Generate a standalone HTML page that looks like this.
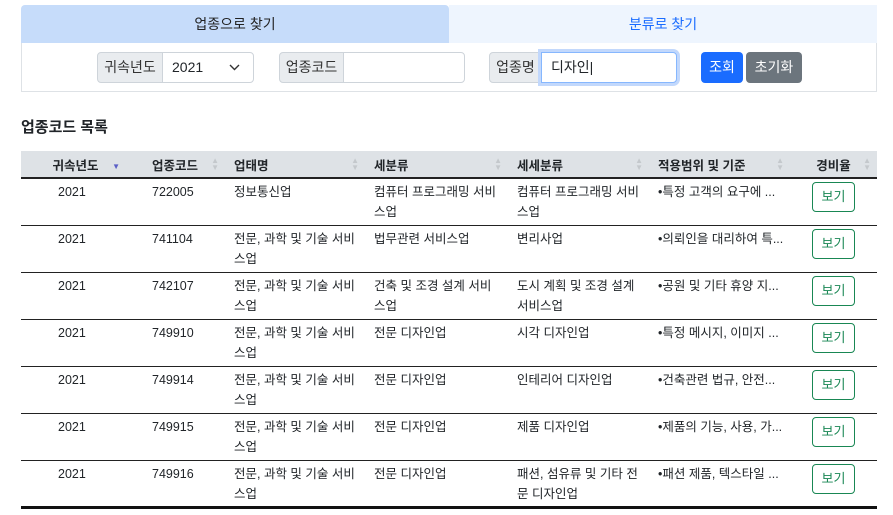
<!DOCTYPE html>
<html><head><meta charset="utf-8"><style>
*{box-sizing:border-box;margin:0;padding:0}
body{width:893px;height:515px;overflow:hidden;background:#fff;font-family:"Liberation Sans","Noto Sans CJK KR",sans-serif;color:#212529;font-size:13px;position:relative}
.abs{position:absolute}
.tab{top:5px;height:38px;line-height:38px;text-align:center;font-size:14px}
.lbl{background:#e9ecef;border:1px solid #ced4da;height:31px;line-height:29px;text-align:center;font-size:14px;color:#333}
.inp{background:#fff;border:1px solid #ced4da;height:31px;line-height:29px;font-size:14px;padding-left:9px}
table{position:absolute;left:21px;top:151px;width:856px;border-collapse:collapse;font-size:12.5px;table-layout:fixed}
th{background:#dee2e6;height:27px;font-weight:bold;text-align:left;position:relative;border-bottom:2px solid #222;padding-left:9px}
th .s{position:absolute;right:6px;top:6px;color:#c4c8cc;font-size:8px;line-height:7px}
td{height:47px;vertical-align:top;padding:3px 0 0 9px;line-height:20px;border-bottom:1px solid #222;white-space:nowrap;overflow:hidden}
.b{display:inline-block;width:43px;height:30px;border:1px solid #198754;border-radius:4px;color:#198754;text-align:center;line-height:28px;font-size:13px;margin-top:3px}
</style></head><body>
<div class="abs tab" style="left:21px;width:428px;background:#c6dcfa;border-radius:4px 4px 0 0;color:#222">업종으로 찾기</div>
<div class="abs tab" style="left:449px;width:428px;background:#eef5fe;color:#1a6cff">분류로 찾기</div>
<div class="abs" style="left:21px;top:43px;width:856px;height:49px;border:1px solid #dee2e6;border-top:none"></div>
<div class="abs lbl" style="left:97px;top:52px;width:66px;border-radius:4px 0 0 4px">귀속년도</div>
<div class="abs inp" style="left:162px;top:52px;width:92px;border-radius:0 4px 4px 0">2021<svg style="position:absolute;left:66px;top:11px" width="11" height="7" viewBox="0 0 11 7"><path d="M1 1l4.5 4.5L10 1" stroke="#333" stroke-width="1.4" fill="none"/></svg></div>
<div class="abs lbl" style="left:279px;top:52px;width:65px;border-radius:4px 0 0 4px">업종코드</div>
<div class="abs inp" style="left:343px;top:52px;width:122px;border-radius:0 4px 4px 0"></div>
<div class="abs lbl" style="left:489px;top:52px;width:53px;border-radius:4px 0 0 4px">업종명</div>
<div class="abs inp" style="left:541px;top:52px;width:136px;border-radius:0 4px 4px 0;border-color:#86b7fe;box-shadow:0 0 0 3px #c2d8fc">디자인|</div>
<div class="abs" style="left:701px;top:52px;width:42px;height:31px;background:#1a6cff;color:#fff;border-radius:4px;text-align:center;line-height:31px;font-size:14px">조회</div>
<div class="abs" style="left:746px;top:52px;width:56px;height:31px;background:#6c757d;color:#fff;border-radius:4px;text-align:center;line-height:31px;font-size:14px">초기화</div>
<div class="abs" style="left:21px;top:116px;font-size:15px;font-weight:bold">업종코드 목록</div>
<table>
<colgroup><col style="width:109px"><col style="width:95px"><col style="width:140px"><col style="width:143px"><col style="width:141px"><col style="width:141px"><col></colgroup>
<tr><th style="text-align:center;padding:0">귀속년도<span style="position:absolute;right:10px;top:11px;color:#5b5fc7;font-size:8px">▼</span></th><th style="padding-left:22px">업종코드<span class="s">▲<br>▼</span></th><th>업태명<span class="s">▲<br>▼</span></th><th>세분류<span class="s">▲<br>▼</span></th><th>세세분류<span class="s">▲<br>▼</span></th><th>적용범위 및 기준<span class="s">▲<br>▼</span></th><th style="text-align:center;padding:0">경비율<span class="s">▲<br>▼</span></th></tr>
<tr><td style="padding-left:37px">2021</td><td style="padding-left:22px">722005</td><td>정보통신업</td><td>컴퓨터 프로그래밍 서비<br>스업</td><td>컴퓨터 프로그래밍 서비<br>스업</td><td>•특정 고객의 요구에 ...</td><td style="text-align:center;padding:0"><span class="b">보기</span></td></tr>
<tr><td style="padding-left:37px">2021</td><td style="padding-left:22px">741104</td><td>전문, 과학 및 기술 서비<br>스업</td><td>법무관련 서비스업</td><td>변리사업</td><td>•의뢰인을 대리하여 특...</td><td style="text-align:center;padding:0"><span class="b">보기</span></td></tr>
<tr><td style="padding-left:37px">2021</td><td style="padding-left:22px">742107</td><td>전문, 과학 및 기술 서비<br>스업</td><td>건축 및 조경 설계 서비<br>스업</td><td>도시 계획 및 조경 설계<br>서비스업</td><td>•공원 및 기타 휴양 지...</td><td style="text-align:center;padding:0"><span class="b">보기</span></td></tr>
<tr><td style="padding-left:37px">2021</td><td style="padding-left:22px">749910</td><td>전문, 과학 및 기술 서비<br>스업</td><td>전문 디자인업</td><td>시각 디자인업</td><td>•특정 메시지, 이미지 ...</td><td style="text-align:center;padding:0"><span class="b">보기</span></td></tr>
<tr><td style="padding-left:37px">2021</td><td style="padding-left:22px">749914</td><td>전문, 과학 및 기술 서비<br>스업</td><td>전문 디자인업</td><td>인테리어 디자인업</td><td>•건축관련 법규, 안전...</td><td style="text-align:center;padding:0"><span class="b">보기</span></td></tr>
<tr><td style="padding-left:37px">2021</td><td style="padding-left:22px">749915</td><td>전문, 과학 및 기술 서비<br>스업</td><td>전문 디자인업</td><td>제품 디자인업</td><td>•제품의 기능, 사용, 가...</td><td style="text-align:center;padding:0"><span class="b">보기</span></td></tr>
<tr><td style="padding-left:37px;border-bottom:3px solid #111">2021</td><td style="padding-left:22px;border-bottom:3px solid #111">749916</td><td style="border-bottom:3px solid #111">전문, 과학 및 기술 서비<br>스업</td><td style="border-bottom:3px solid #111">전문 디자인업</td><td style="border-bottom:3px solid #111">패션, 섬유류 및 기타 전<br>문 디자인업</td><td style="border-bottom:3px solid #111">•패션 제품, 텍스타일 ...</td><td style="text-align:center;padding:0;border-bottom:3px solid #111"><span class="b">보기</span></td></tr>
</table>
</body></html>
